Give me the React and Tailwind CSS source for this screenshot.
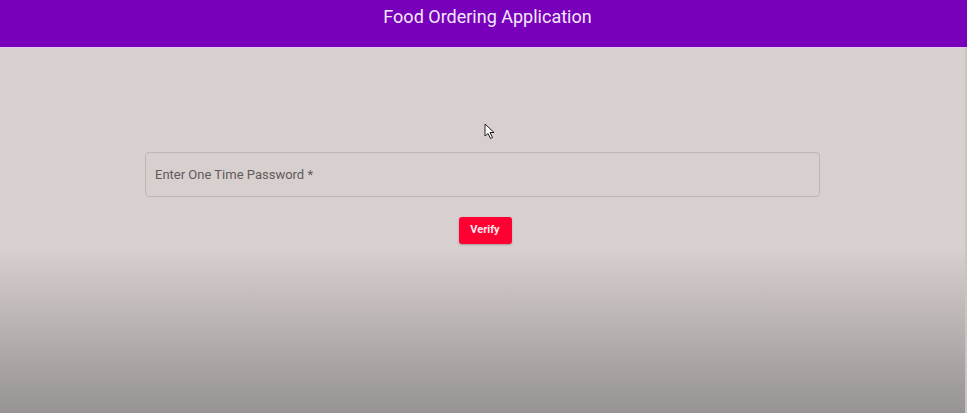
import React, { useState } from 'react';

const Cursor = () => (
  <svg
    className="absolute left-[484px] top-[123px]"
    width="12"
    height="17"
    viewBox="0 0 12 17"
  >
    <path
      d="M1 1 L1 13 L4 10.5 L6.5 15.5 L8.5 14.5 L6 9.5 L10 9.5 Z"
      fill="#ffffff"
      stroke="#222222"
      strokeWidth="1"
      strokeLinejoin="round"
    />
  </svg>
);

const App = () => {
  const [otp, setOtp] = useState('');

  return (
    <div className="relative h-[413px] w-[967px] overflow-hidden font-['Roboto',sans-serif]">
      <header className="flex h-[47px] items-start justify-center bg-[#7800bb] pl-[8px] pt-[5px]">
        <h1 className="text-[18px] leading-[24px] text-[#f3e8fb]">Food Ordering Application</h1>
      </header>

      <main className="h-[366px] border-t border-[#e6c8f0] border-r-2 border-r-[#c8c4c4] bg-linear-to-b from-[#d8d0ce] from-[55%] to-[#979393] pt-[104px]">
        <div className="flex flex-col items-center">
          <input
            type="text"
            value={otp}
            onChange={(e) => setOtp(e.target.value)}
            placeholder="Enter One Time Password *"
            className="h-[45px] w-[675px] rounded-[4px] border border-[#bcb6b5] bg-transparent px-[9px] text-[13px] text-[#5c5757] placeholder:text-[#615b5b] focus:outline-none"
          />
          <button
            type="button"
            className="ml-[5px] mt-[20px] h-[27px] w-[53px] rounded-[3px] bg-[#ff0033] text-[11px] font-bold text-[#fde8ec] shadow-[0_1px_2px_rgba(0,0,0,0.25)]"
          >
            Verify
          </button>
        </div>
      </main>

      <Cursor />
    </div>
  );
};

export default App;
